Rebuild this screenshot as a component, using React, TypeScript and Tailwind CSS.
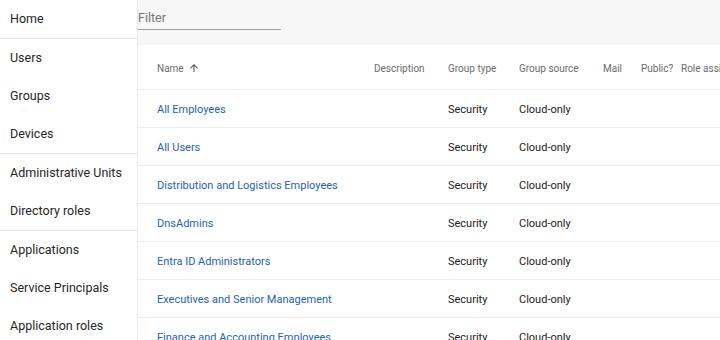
const nav: string[][] = [
  ['Home'],
  ['Users', 'Groups', 'Devices'],
  ['Administrative Units', 'Directory roles'],
  ['Applications', 'Service Principals', 'Application roles'],
];

const groups = [
  'All Employees',
  'All Users',
  'Distribution and Logistics Employees',
  'DnsAdmins',
  'Entra ID Administrators',
  'Executives and Senior Management',
  'Finance and Accounting Employees',
];

const cols = 'grid grid-cols-[217px_74px_71px_84px_38px_40px_80px] items-center pl-[19px]';

function ArrowUp() {
  return (
    <svg width="12" height="12" viewBox="0 0 24 24" className="ml-1 fill-[#555]">
      <path d="M4 12l1.41 1.41L11 7.83V20h2V7.83l5.58 5.59L20 12l-8-8-8 8z" />
    </svg>
  );
}

export default function App() {
  return (
    <div className="flex h-[340px] w-[720px] overflow-hidden bg-white font-['Roboto',sans-serif]">
      {/* Sidebar */}
      <nav className="w-[138px] shrink-0 border-r border-[#ececec] bg-white">
        {nav.map((section, i) => (
          <div key={i} className={i < nav.length - 1 ? 'border-b border-[#e8e8e8]' : ''}>
            {section.map((item) => (
              <div key={item} className="flex h-[38px] items-center whitespace-nowrap pl-[10px] text-[12.5px] text-[#262626]">
                {item}
              </div>
            ))}
          </div>
        ))}
      </nav>

      {/* Main */}
      <main className="flex-1 overflow-hidden bg-[#f7f7f7]">
        <div className="h-[45px]">
          <input
            type="text"
            placeholder="Filter"
            className="mt-[9px] w-[143px] border-b border-[#9e9e9e] bg-transparent pb-[1px] text-[12.5px] text-[#212121] placeholder:text-[#757575] focus:outline-none"
          />
        </div>
        <div className="bg-white">
          <div className={`${cols} h-[45px] border-b border-[#ececec] pt-[2px] text-[10px] text-[#6b6b6b] whitespace-nowrap`}>
            <div className="flex items-center">Name<ArrowUp /></div>
            <div>Description</div>
            <div>Group type</div>
            <div>Group source</div>
            <div>Mail</div>
            <div>Public?</div>
            <div>Role assignable</div>
          </div>
          {groups.map((g) => (
            <div key={g} className={`${cols} h-[38px] border-b border-[#ececec] pt-[3px] text-[11px] whitespace-nowrap`}>
              <a className="cursor-pointer text-[#1f63b0]">{g}</a>
              <div />
              <div className="text-[#212121]">Security</div>
              <div className="text-[#212121]">Cloud-only</div>
              <div />
              <div />
              <div />
            </div>
          ))}
        </div>
      </main>
    </div>
  );
}
